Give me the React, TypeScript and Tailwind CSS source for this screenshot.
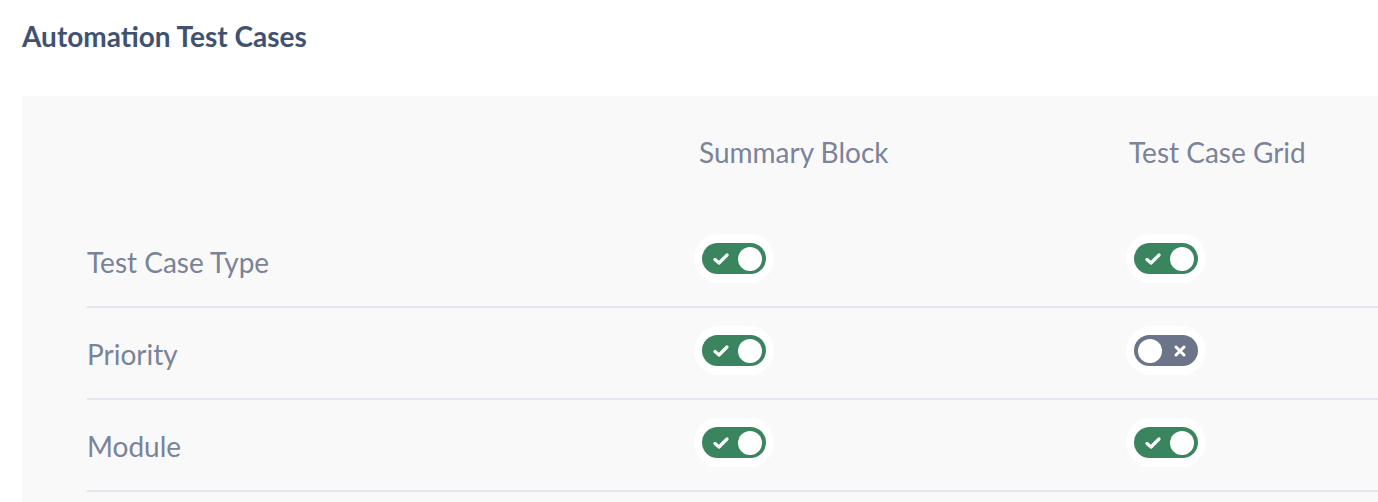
import React from "react";

function Toggle({ on }: { on: boolean }) {
  return (
    <div className="inline-flex rounded-full bg-white px-[8px] py-[9px]">
      {on ? (
        <div className="flex h-[31px] w-[64px] items-center justify-between rounded-full bg-[#3b8460] pl-[10px] pr-[4px]">
          <svg width="18" height="14" viewBox="0 0 18 14">
            <path d="M3 7.5 L7 11 L15 3" fill="none" stroke="white" strokeWidth="3.2" strokeLinecap="round" strokeLinejoin="round" />
          </svg>
          <div className="h-[24px] w-[24px] rounded-full bg-white" />
        </div>
      ) : (
        <div className="flex h-[31px] w-[64px] items-center justify-between rounded-full bg-[#6b7489] pl-[4px] pr-[11px]">
          <div className="h-[24px] w-[24px] rounded-full bg-white" />
          <svg width="14" height="14" viewBox="0 0 14 14">
            <path d="M3 3 L11 11 M11 3 L3 11" fill="none" stroke="white" strokeWidth="3" strokeLinecap="round" />
          </svg>
        </div>
      )}
    </div>
  );
}

const rows = [
  { label: "Test Case Type", a: true, b: true },
  { label: "Priority", a: true, b: false },
  { label: "Module", a: true, b: true },
];

export default function App() {
  return (
    <div className="h-[502px] w-[1378px] overflow-hidden bg-white" style={{ fontFamily: "Lato, 'Open Sans', sans-serif" }}>
      <div className="px-[22px] pt-[20px]">
        <h1 className="text-[28px] font-bold leading-[32px] text-[#415270]">Automation Test Cases</h1>
      </div>
      <div className="ml-[22px] mt-[44px] h-[420px] bg-[#f9f9fa] pl-[65px] pt-[39px]">
        <div className="grid grid-cols-[612px_430px_1fr] text-[28px] leading-[34px] text-[#7a8398]">
          <div />
          <div>Summary Block</div>
          <div>Test Case Grid</div>
        </div>
        <div className="mt-[47px]">
          {rows.map((r) => (
            <div key={r.label} className="grid h-[92px] grid-cols-[612px_430px_1fr] items-center border-b-2 border-[#e3e6ee] text-[28px] leading-[34px] text-[#7a8398]">
              <div className="pt-[2px]">{r.label}</div>
              <div className="-ml-[5px] mb-[5px]"><Toggle on={r.a} /></div>
              <div className="-ml-[3px] mb-[5px]"><Toggle on={r.b} /></div>
            </div>
          ))}
        </div>
      </div>
    </div>
  );
}
